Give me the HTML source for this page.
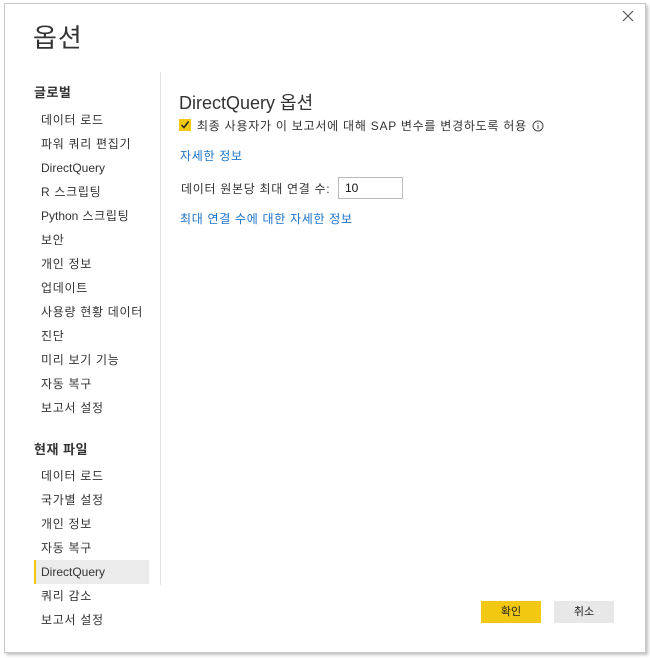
<!DOCTYPE html>
<html><head><meta charset="utf-8"><style>
body{margin:0;width:650px;height:658px;background:#fff;font-family:"Liberation Sans","Noto Sans CJK KR",sans-serif;color:#333;position:relative;overflow:hidden}
.dlg{position:absolute;left:4px;top:3px;width:640px;height:648px;border:1px solid #c8c8c8;box-shadow:2px 2px 3px rgba(0,0,0,.25);background:#fff}
.a{position:absolute;white-space:nowrap}
.nav{position:absolute;left:41px;font-size:12px;color:#333;line-height:24px;letter-spacing:0.7px}
.l{letter-spacing:0}
.h{position:absolute;left:34px;font-size:13px;font-weight:bold;color:#333;letter-spacing:0.5px}
.link{color:#1a73c8;font-size:12px;letter-spacing:0.7px}
</style></head><body>
<div class="dlg"></div>
<div class="a" style="left:33px;top:18px;font-size:26px;color:#333;letter-spacing:1px">옵션</div>
<svg class="a" style="left:622px;top:10px" width="12" height="12"><path d="M1 1L11 11M11 1L1 11" stroke="#555" stroke-width="1.2"/></svg>
<div class="a" style="left:160px;top:72px;width:1px;height:513px;background:#e3e3e3"></div>
<div class="h" style="top:82px">글로벌</div>
<div class="nav" style="top:108px">데이터 로드<br>파워 쿼리 편집기<br><span class="l">DirectQuery</span><br>R 스크립팅<br><span class="l">Python</span> 스크립팅<br>보안<br>개인 정보<br>업데이트<br>사용량 현황 데이터<br>진단<br>미리 보기 기능<br>자동 복구<br>보고서 설정</div>
<div class="h" style="top:439px">현재 파일</div>
<div class="a" style="left:34px;top:560px;width:115px;height:24px;background:#ebebeb;border-left:2px solid #f2c811;box-sizing:border-box"></div>
<div class="nav" style="top:464px">데이터 로드<br>국가별 설정<br>개인 정보<br>자동 복구<br><span class="l">DirectQuery</span><br>쿼리 감소<br>보고서 설정</div>
<div class="a" style="left:179px;top:89px;font-size:18px;color:#333">DirectQuery 옵션</div>
<div class="a" style="left:179px;top:119px;width:12px;height:12px;background:#f2c811"></div>
<svg class="a" style="left:179px;top:119px" width="12" height="12"><path d="M2.5 6L5 8.5L9.5 2.5" stroke="#222" stroke-width="1.5" fill="none"/></svg>
<div class="a" style="left:197px;top:117px;font-size:12px;letter-spacing:0.75px">최종 사용자가 이 보고서에 대해 SAP 변수를 변경하도록 허용</div>
<svg class="a" style="left:532px;top:120px" width="12" height="12"><circle cx="6" cy="6" r="5" stroke="#444" fill="none"/><path d="M6 5v4M6 3v1" stroke="#444"/></svg>
<div class="a link" style="left:180px;top:147px">자세한 정보</div>
<div class="a" style="left:181px;top:180px;font-size:12px;letter-spacing:0.7px">데이터 원본당 최대 연결 수:</div>
<div class="a" style="left:338px;top:177px;width:65px;height:22px;border:1px solid #bbb;font-size:12px;line-height:20px;padding-left:6px;box-sizing:border-box;color:#111">10</div>
<div class="a link" style="left:180px;top:210px">최대 연결 수에 대한 자세한 정보</div>
<div class="a" style="left:481px;top:601px;width:60px;height:22px;background:#f2c811;font-size:11px;text-align:center;line-height:22px;color:#222">확인</div>
<div class="a" style="left:554px;top:601px;width:60px;height:22px;background:#e8e8e8;font-size:11px;text-align:center;line-height:22px;color:#222">취소</div>
</body></html>
